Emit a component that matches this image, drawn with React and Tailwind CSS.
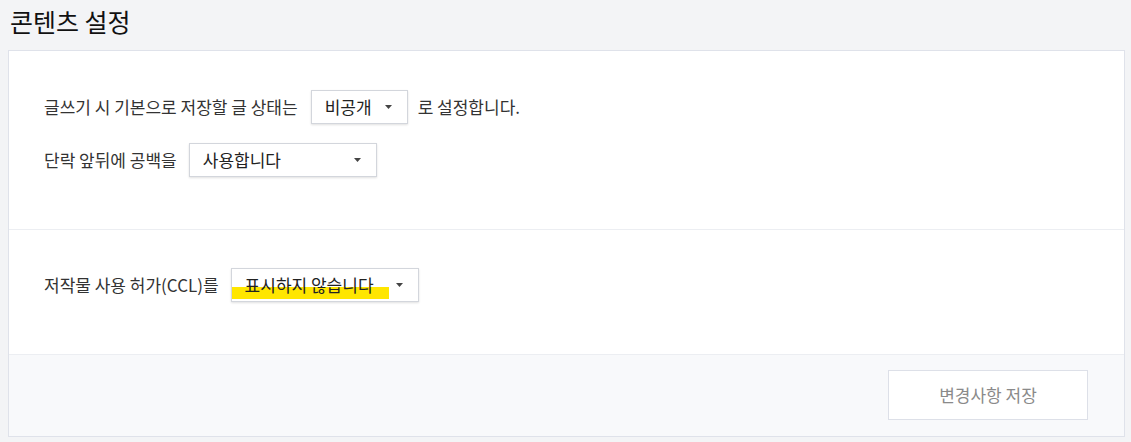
import React from 'react';

const font = { fontFamily: '"Noto Sans CJK KR", "Noto Sans", sans-serif' };

const Caret = () => (
  <svg width="7" height="4" viewBox="0 0 7 4" className="shrink-0">
    <path d="M0 0 H7 L3.5 4 Z" fill="#444" />
  </svg>
);

const Select = ({ value, width, children }) => (
  <div
    className={`relative flex items-center justify-between h-[34px] ${width} pl-[13px] pr-[15px] bg-white border border-[#d3d6dc] shadow-[0_1px_2px_rgba(0,0,0,0.12)] text-[17px] text-[#222]`}
  >
    {children}
    <span className="relative">{value}</span>
    <Caret />
  </div>
);

export default function App() {
  return (
    <div className="w-[1131px] h-[442px] bg-[#f3f4f6] overflow-hidden" style={font}>
      <h1 className="pl-[10px] pt-[3px] h-[50px] text-[25px] leading-[36px] text-[#111] font-normal">콘텐츠 설정</h1>

      <div className="ml-[8px] w-[1117px] h-[387px] border border-[#dfe2ea] bg-white flex flex-col">
        <div className="h-[179px] pt-[39px] pl-[35px] flex flex-col gap-[19px] border-b border-[#eceef2] text-[17px] text-[#333]">
          <div className="flex items-center">
            <span>글쓰기 시 기본으로 저장할 글 상태는</span>
            <div className="ml-[13px]">
              <Select value="비공개" width="w-[97px]" />
            </div>
            <span className="ml-[10px]">로 설정합니다.</span>
          </div>
          <div className="flex items-center">
            <span>단락 앞뒤에 공백을</span>
            <div className="ml-[12px]">
              <Select value="사용합니다" width="w-[188px]" />
            </div>
          </div>
        </div>

        <div className="h-[124px] pt-[38px] pl-[35px] text-[17px] text-[#333]">
          <div className="flex items-center">
            <span>저작물 사용 허가(CCL)를</span>
            <div className="ml-[12px]">
              <Select value="표시하지 않습니다" width="w-[188px]">
                <div className="absolute left-0 top-[18px] w-[157px] h-[12px] bg-[#ffe600]" />
              </Select>
            </div>
          </div>
        </div>

        <div className="flex-1 bg-[#f8f9fb] border-t border-[#eceef2] flex justify-end items-start pt-[15px] pr-[36px]">
          <button className="w-[200px] h-[50px] bg-white border border-[#dde0e8] text-[17px] text-[#8a8a8a]">
            변경사항 저장
          </button>
        </div>
      </div>
    </div>
  );
}
